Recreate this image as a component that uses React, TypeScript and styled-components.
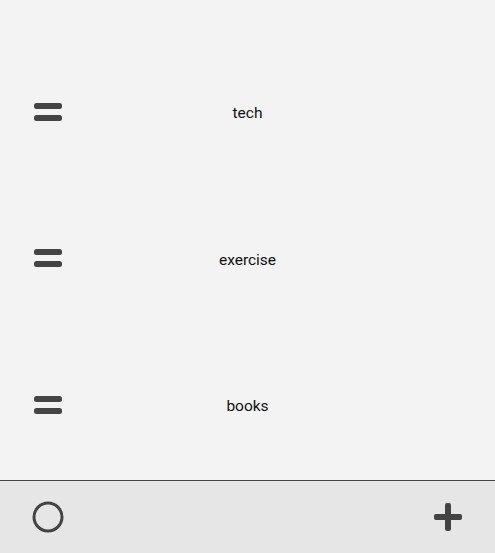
import React from 'react';
import styled, { createGlobalStyle } from 'styled-components';

const GlobalStyle = createGlobalStyle`
  html, body {
    margin: 0;
    padding: 0;
    background: #f3f3f3;
  }
  body {
    font-family: Roboto, 'Liberation Sans', sans-serif;
  }
`;

const categories = ['tech', 'exercise', 'books'];

const DragHandle = () => (
  <svg width="28" height="19" viewBox="0 0 28 19">
    <rect x="0" y="0" width="28" height="6" rx="2.5" fill="#444" />
    <rect x="0" y="12" width="28" height="6" rx="2.5" fill="#444" />
  </svg>
);

const CircleIcon = () => (
  <svg width="32" height="32" viewBox="0 0 32 32">
    <circle cx="16" cy="16" r="14" fill="none" stroke="#444" strokeWidth="3" />
  </svg>
);

const PlusIcon = () => (
  <svg width="28" height="28" viewBox="0 0 28 28">
    <rect x="11" y="0" width="6" height="28" rx="2" fill="#444" />
    <rect x="0" y="11" width="28" height="6" rx="2" fill="#444" />
  </svg>
);

export default function App() {
  return (
    <>
      <GlobalStyle />
      <Screen>
        <List>
          {categories.map((name) => (
            <Row key={name}>
              <HandleCell>
                <DragHandle />
              </HandleCell>
              <Label>{name}</Label>
            </Row>
          ))}
        </List>
        <BottomBar>
          <IconButton>
            <CircleIcon />
          </IconButton>
          <IconButton>
            <PlusIcon />
          </IconButton>
        </BottomBar>
      </Screen>
    </>
  );
}

const Screen = styled.div`
  display: flex;
  flex-direction: column;
  width: 495px;
  height: 553px;
  background: #f3f3f3;
`;

const List = styled.div`
  flex: 1;
  display: flex;
  flex-direction: column;
  padding-top: 39px;
  overflow: hidden;
`;

const Row = styled.div`
  position: relative;
  display: flex;
  align-items: center;
  justify-content: center;
  height: 146.5px;
  flex-shrink: 0;
`;

const HandleCell = styled.div`
  position: absolute;
  left: 34px;
  top: 0;
  bottom: 0;
  display: flex;
  align-items: center;
`;

const Label = styled.span`
  margin-top: 2px;
  font-size: 15.5px;
  color: #111;
`;

const BottomBar = styled.div`
  display: flex;
  align-items: center;
  justify-content: space-between;
  height: 72px;
  padding: 0 31px 0 32px;
  background: #e6e6e6;
  border-top: 1px solid #444;
`;

const IconButton = styled.div`
  display: flex;
  align-items: center;
  justify-content: center;
  width: 32px;
  height: 32px;
`;
